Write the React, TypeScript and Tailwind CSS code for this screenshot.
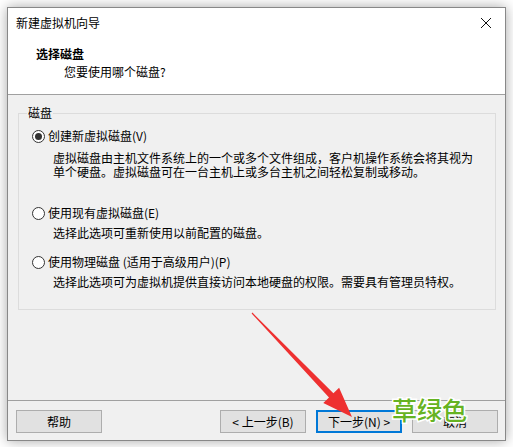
import React from 'react'

const font = "font-['Microsoft_YaHei','Noto_Sans_CJK_SC',sans-serif]"

const Radio = ({ checked, label }: { checked?: boolean; label: string }) => (
  <div className="flex items-center h-4 text-[12px] leading-4 text-black">
    <span className="w-[13px] h-[13px] rounded-full border border-[#333] bg-white flex items-center justify-center">
      {checked && <span className="w-[7px] h-[7px] rounded-full bg-[#333]" />}
    </span>
    <span className="ml-[3px]">{label}</span>
  </div>
)

const Btn = ({ children, active }: { children: React.ReactNode; active?: boolean }) => (
  <div
    className={`w-[86px] h-[23px] flex items-center justify-center text-[12px] text-black bg-[#e1e1e1] ${
      active ? 'border-2 border-[#0078d7]' : 'border border-[#adadad]'
    }`}
  >
    {children}
  </div>
)

export default function App() {
  return (
    <div className={`relative w-[513px] h-[447px] bg-white overflow-hidden ${font}`}>
      <div className="ml-[7px] mt-[7px] w-[499px] h-[434px] flex flex-col border border-[#888] bg-white shadow-[0_0_12px_rgba(0,0,0,0.35)]">
        {/* title bar */}
        <div className="h-[29px] flex items-center justify-between pl-[8px] pr-[10px] text-[12px] text-black">
          <span>新建虚拟机向导</span>
          <svg width="12" height="12" viewBox="0 0 12 12" className="mr-[3px]">
            <path d="M1 1L11 11M11 1L1 11" stroke="#111" strokeWidth="1" />
          </svg>
        </div>

        {/* header */}
        <div className="h-[57px] pt-[9px] pl-[28px] text-[12px] leading-4 text-black">
          <div className="font-bold">选择磁盘</div>
          <div className="mt-[2px] pl-[28px]">您要使用哪个磁盘?</div>
        </div>

        {/* body */}
        <div className="flex-1 border-t border-[#a0a0a0] bg-[#f0f0f0] pt-[10px] pl-[10px] pr-[9px]">
          <fieldset className="border border-[#dcdcdc] pl-[13px] pt-[7px] pb-[20px]">
            <legend className="ml-[-5px] px-[1px] text-[12px] leading-4 text-black">磁盘</legend>
            <Radio checked label="创建新虚拟磁盘(V)" />
            <div className="mt-[7px] pl-[21px] text-[12px] leading-[14px] text-black">
              <div>虚拟磁盘由主机文件系统上的一个或多个文件组成，客户机操作系统会将其视为</div>
              <div>单个硬盘。虚拟磁盘可在一台主机上或多台主机之间轻松复制或移动。</div>
            </div>
            <div className="mt-[26px]">
              <Radio label="使用现有虚拟磁盘(E)" />
            </div>
            <div className="mt-[5px] pl-[21px] text-[12px] leading-[14px] text-black">
              选择此选项可重新使用以前配置的磁盘。
            </div>
            <div className="mt-[14px]">
              <Radio label="使用物理磁盘 (适用于高级用户)(P)" />
            </div>
            <div className="mt-[5px] pl-[21px] text-[12px] leading-[14px] text-black">
              选择此选项可为虚拟机提供直接访问本地硬盘的权限。需要具有管理员特权。
            </div>
          </fieldset>
        </div>

        {/* footer buttons */}
        <div className="h-[40px] border-t border-[#a0a0a0] bg-[#f0f0f0] flex items-start pt-[9px] pl-[8px] pr-[7px]">
          <Btn>帮助</Btn>
          <div className="flex-1" />
          <div className="flex gap-[10px]">
            <Btn>&lt; 上一步(B)</Btn>
            <Btn active>下一步(N) &gt;</Btn>
            <Btn>取消</Btn>
          </div>
        </div>
      </div>

      {/* annotation arrow */}
      <svg className="absolute left-0 top-0 pointer-events-none" width="513" height="447">
        <polygon
          points="251.6,313.4 252.4,312.6 333.4,393.3 339.1,387.8 352,417 323.3,403 329,397.5"
          fill="#ee3030"
        />
      </svg>

      {/* watermark */}
      <span className="absolute left-[392px] top-[395px] text-[25px] leading-[29px] font-medium text-[#66b322] [-webkit-text-stroke:3px_white] [paint-order:stroke_fill]">
        草绿色
      </span>
    </div>
  )
}
